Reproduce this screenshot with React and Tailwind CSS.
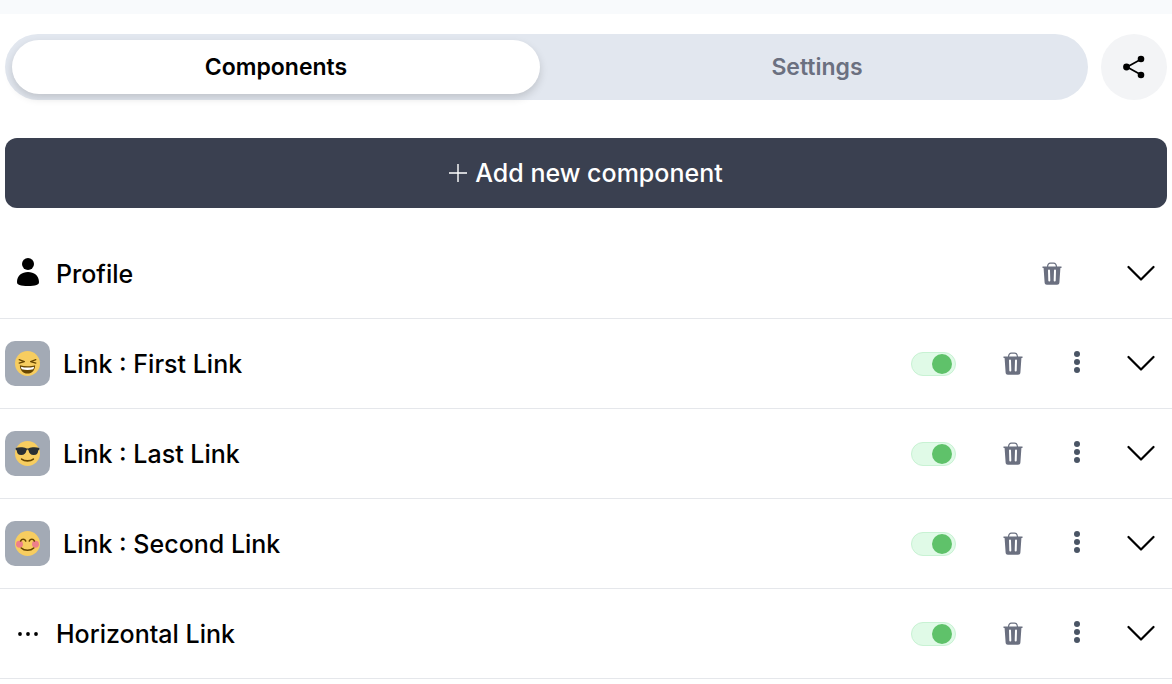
import { useState } from 'react'

const components = [
  { id: 'profile', label: 'Profile', icon: 'profile' },
  { id: 'first', label: 'Link : First Link', emoji: 'laughing', enabled: true },
  { id: 'last', label: 'Link : Last Link', emoji: 'sunglasses', enabled: true },
  { id: 'second', label: 'Link : Second Link', emoji: 'blush', enabled: true },
  { id: 'horizontal', label: 'Horizontal Link', icon: 'dots', enabled: true }
]

function ProfileIcon() {
  return (
    <svg className="w-6 h-8" viewBox="0 0 24 32">
      <circle cx="12" cy="6" r="6" />
      <path d="M1 24C1 17.500 6 14 12 14s11 3.500 11 10c0 1.800-1 2.500-2.500 2.900C18.500 27.600 15.500 28 12 28s-6.500-.4-8.500-1.100C2 26.500 1 25.800 1 24z" />
    </svg>
  )
}

function DotsIcon() {
  return (
    <svg className="w-6 h-7" viewBox="0 0 24 28">
      <circle cx="4" cy="14" r="1.900" />
      <circle cx="12" cy="14" r="1.900" />
      <circle cx="20" cy="14" r="1.900" />
    </svg>
  )
}

function ShareIcon() {
  return (
    <svg className="w-6 h-6" viewBox="0 0 24 24">
      <path d="M19.500 4 5 12l14.500 8" fill="none" stroke="currentColor" strokeWidth="1.700" />
      <circle cx="4.500" cy="12" r="3.400" />
      <circle cx="19" cy="4" r="3.300" />
      <circle cx="19" cy="20" r="3.300" />
    </svg>
  )
}

function TrashIcon() {
  return (
    <svg className="w-5 h-6" viewBox="0 0 20 24">
      <path d="M5.500 5c.2-2.600 1.200-3.900 2.900-3.900h3.200c1.700 0 2.700 1.300 2.900 3.900" fill="none" stroke="currentColor" strokeWidth="1.300" />
      <path d="M.5 4.400h19v1.600h-1.100l-1 14.600c-.1 1.400-1 2.200-2.300 2.200H4.900c-1.300 0-2.200-.8-2.300-2.200L1.600 6H.5z" fill="currentColor" />
      <path d="m7 8.500.3 10M13 8.500l-.3 10" fill="none" stroke="#fff" strokeWidth="2" strokeLinecap="round" />
    </svg>
  )
}

function MoreIcon() {
  return (
    <svg className="w-6 h-7" viewBox="0 0 24 28" fill="currentColor">
      <circle cx="12" cy="4" r="3" />
      <circle cx="12" cy="12" r="3" />
      <circle cx="12" cy="20" r="3" />
    </svg>
  )
}

function ChevronIcon() {
  return (
    <svg className="w-7 h-7" viewBox="0 0 28 28">
      <path d="m1.500 7 12.500 12.500L26.500 7" fill="none" stroke="currentColor" strokeWidth="2.200" strokeLinecap="round" strokeLinejoin="round" />
    </svg>
  )
}

function Emoji({ name }) {
  return (
    <svg className="w-[25px] h-[25px]" viewBox="0 0 36 36">
      <circle cx="18" cy="18" r="18" fill="#f7cd60" />
      {name === 'laughing' && (
        <>
          <path d="M7 20.500c3.200 1 7 1.500 11 1.500s7.800-.5 11-1.500c0 7-4.500 12-11 12s-11-5-11-12z" fill="#664500" />
          <path d="M8.500 22.500c3 .9 6.200 1.200 9.500 1.200s6.500-.3 9.500-1.200c-.2 1.600-.7 2.800-1.300 3.800-5 1.200-11.400 1.200-16.400 0-.6-1-1.100-2.200-1.300-3.800z" fill="#fff" />
          <path d="m6 12.500 7.500 2.700L6 17.500M30 12.500l-7.500 2.700 7.500 2.300" fill="none" stroke="#664500" strokeWidth="1.800" strokeLinecap="round" strokeLinejoin="round" />
        </>
      )}
      {name === 'sunglasses' && (
        <>
          <path d="M1 10c5-1.500 11.500-1.200 15 .4 1.300.5 2.700.5 4 0 3.500-1.600 10-1.900 15-.4v2.200l-1.500 1.300c-.5 4.500-2.200 6.500-6.500 6.500-4.500 0-6.500-2.500-7.500-6.500-.5-1.500-2.500-1.500-3 0C15.500 17.500 13.500 20 9 20c-4.300 0-6-2-6.500-6.500L1 12.200z" fill="#292f33" />
          <path d="M9.500 26c4.500 3.500 12.500 3.500 17 0" fill="none" stroke="#664500" strokeWidth="2.200" strokeLinecap="round" />
        </>
      )}
      {name === 'blush' && (
        <>
          <circle cx="6.500" cy="19" r="5" fill="#ee7f8a" />
          <circle cx="29.500" cy="19" r="5" fill="#ee7f8a" />
          <path d="M8 14.500c1.500-3.300 6-3.300 7.500 0M20.500 14.500c1.500-3.300 6-3.300 7.500 0M9 24.500c4.500 4.500 13.500 4.500 18 0" fill="none" stroke="#664500" strokeWidth="2.200" strokeLinecap="round" />
        </>
      )}
    </svg>
  )
}

function ComponentRow({ item, enabled, onToggle }) {
  const hasToggle = item.enabled !== undefined

  return (
    <li className="flex items-center h-[90px] pl-[5px] pr-[17px] border-b border-gray-200">
      {item.emoji ? (
        <span className="flex items-center justify-center w-[45px] h-[45px] mr-[13px] rounded-[10px] bg-[#a3aab5]">
          <Emoji name={item.emoji} />
        </span>
      ) : (
        <span className="flex items-center justify-center w-[45px] mr-[6px]">
          {item.icon === 'profile' ? <ProfileIcon /> : <DotsIcon />}
        </span>
      )}
      <span className="flex-1 text-[25px] leading-8 font-medium">{item.label}</span>

      {/* Row controls */}
      {hasToggle && (
        <input
          type="checkbox"
          role="switch"
          aria-label={`Show ${item.label}`}
          checked={enabled}
          onChange={onToggle}
          className="appearance-none flex items-center w-[45px] h-6 mr-[47px] rounded-full border border-gray-300 bg-gray-100 cursor-pointer before:block before:w-5 before:h-5 before:rounded-full before:bg-gray-400 checked:border-[#c8f2d3] checked:bg-[#e0fae7] checked:before:bg-[#5fc26a] checked:before:translate-x-5"
        />
      )}
      <button
        className={`text-[#6b7080] ${hasToggle ? 'mr-[42px]' : 'mr-[65px]'}`}
        aria-label={`Delete ${item.label}`}
      >
        <TrashIcon />
      </button>
      {hasToggle && (
        <button className="mr-[38px] text-gray-600" aria-label={`More options for ${item.label}`}>
          <MoreIcon />
        </button>
      )}
      <button aria-label={`Expand ${item.label}`}>
        <ChevronIcon />
      </button>
    </li>
  )
}

export default function App() {
  const [tab, setTab] = useState('Components')
  const [enabled, setEnabled] = useState({ first: true, last: true, second: true, horizontal: true })

  return (
    <div className="min-h-screen bg-white text-black font-['Inter',sans-serif]">
      <div className="h-[14px] bg-slate-50" />

      <main className="pt-5">
        {/* Tabs and share */}
        <div className="flex gap-[13px] px-[5px]">
          <div className="flex flex-1 gap-[13px] px-[7px] py-[6px] rounded-full bg-[#e2e7ef]" role="tablist">
            {['Components', 'Settings'].map(name => (
              <button
                key={name}
                role="tab"
                aria-selected={tab === name}
                onClick={() => setTab(name)}
                className={`flex-1 h-[54px] rounded-full text-[23px] leading-8 font-semibold ${
                  tab === name ? 'bg-white shadow-[0_4px_8px_rgba(0,0,0,0.15)]' : 'text-[#6b7080]'
                }`}
              >
                {name}
              </button>
            ))}
          </div>
          <button
            className="flex items-center justify-center w-[66px] h-[66px] rounded-full bg-gray-100"
            aria-label="Share"
          >
            <ShareIcon />
          </button>
        </div>

        <div className="px-[5px] pt-[38px] pb-[21px]">
          <button className="flex items-center justify-center gap-2 w-full h-[70px] rounded-xl bg-[#3a4050] text-[25px] leading-8 font-medium text-white">
            <svg className="w-[18px] h-[18px]" viewBox="0 0 18 18">
              <path d="M9 0v18M0 9h18" stroke="currentColor" strokeWidth="1.400" />
            </svg>
            Add new component
          </button>
        </div>

        <ul>
          {components.map(item => (
            <ComponentRow
              key={item.id}
              item={item}
              enabled={enabled[item.id]}
              onToggle={() => setEnabled({ ...enabled, [item.id]: !enabled[item.id] })}
            />
          ))}
        </ul>
      </main>
    </div>
  )
}
